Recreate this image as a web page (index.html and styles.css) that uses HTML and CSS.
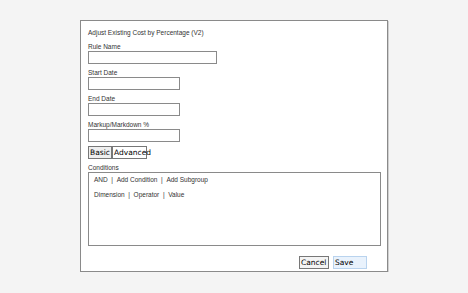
FILE: index.html
```html
<!DOCTYPE html>
<html lang="en">

<head>
    <meta charset="UTF-8">
    <title>Adjust Existing Cost by Percentage (V2)</title>
    <link rel="stylesheet" href="styles.css">
</head>

<body>
    <div class="dialog">
        <div class="title">Adjust Existing Cost by Percentage (V2)</div>

        <label class="label">Rule Name</label>
        <input type="text" class="field field-wide">

        <label class="label">Start Date</label>
        <input type="text" class="field">

        <label class="label">End Date</label>
        <input type="text" class="field">

        <label class="label">Markup/Markdown %</label>
        <input type="text" class="field">

        <div class="tabs">
            <button class="tab">Basic</button>
            <button class="tab tab-advanced">Advanced</button>
        </div>

        <label class="label">Conditions</label>
        <div class="conditions">
            <div class="cond-row">AND &nbsp;| &nbsp;Add Condition &nbsp;| &nbsp;Add Subgroup</div>
            <div class="cond-row">Dimension &nbsp;| &nbsp;Operator &nbsp;| &nbsp;Value</div>
        </div>

        <div class="actions">
            <button class="btn btn-cancel">Cancel</button>
            <button class="btn btn-save">Save</button>
        </div>
    </div>
</body>

</html>
```

FILE: styles.css
```css
* {
    box-sizing: border-box;
}

body {
    background-color: #f4f4f4;
    margin: 0;
    padding: 20px 0 0 80px;
    font-family: 'Liberation Sans', Arial, sans-serif;
    font-size: 6.5px;
    line-height: 8px;
    color: #333;
}

.dialog {
    width: 308px;
    height: 252px;
    background-color: #fff;
    border: 1px solid #8a8a8a;
    box-shadow: 1px 1px 0 #d0d0d0;
    padding: 8px 7px 0 7px;
    display: flex;
    flex-direction: column;
}

.title {
    margin-bottom: 6px;
}

.label {
    display: block;
}

.field {
    display: block;
    height: 13px;
    width: 92px;
    border: 1px solid #8a8a8a;
    margin: 0 0 5px 0;
    padding: 0;
}

.field-wide {
    width: 129px;
}

.tabs {
    display: flex;
    margin-top: -1px;
    margin-bottom: 5px;
}

.tab {
    height: 13px;
    width: 24px;
    padding: 0 1px;
    border: 1px solid #777;
    background-color: #efefef;
    font-family: 'DejaVu Sans', sans-serif;
    font-size: 7.5px;
    line-height: 11px;
    text-align: left;
    white-space: nowrap;
    overflow: visible;
    color: #000;
}

.tab-advanced {
    width: 35px;
    background-color: #fff;
}

.conditions {
    width: 293px;
    height: 74px;
    border: 1px solid #8a8a8a;
    padding: 3px 5px;
}

.cond-row {
    margin-bottom: 7px;
}

.actions {
    display: flex;
    justify-content: flex-end;
    gap: 4px;
    margin-top: 10px;
    padding-right: 13px;
}

.btn {
    height: 13px;
    padding: 0 1px;
    border: 1px solid #777;
    background-color: #f4f4f4;
    font-family: 'DejaVu Sans', sans-serif;
    font-size: 7.5px;
    line-height: 11px;
    color: #000;
    text-align: left;
}

.btn-cancel {
    width: 30px;
}

.btn-save {
    width: 34px;
    border-color: #b9d3ee;
    background-color: #e9f2fc;
}
```
